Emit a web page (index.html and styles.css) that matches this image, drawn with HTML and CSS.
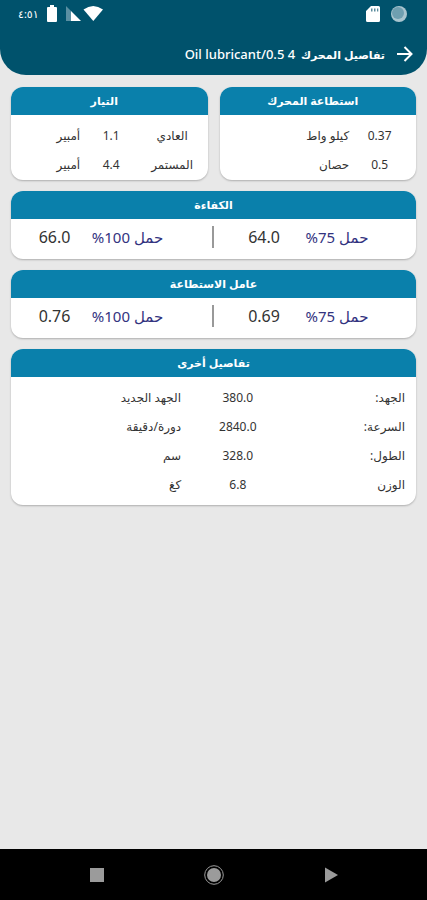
FILE: index.html
```html
<!DOCTYPE html>
<html lang="ar" dir="rtl">
<head>
    <meta charset="UTF-8">
    <meta name="viewport" content="width=device-width, initial-scale=1.0">
    <title>تفاصيل المحرك</title>
    <link rel="stylesheet" href="styles.css">
</head>
<body>
    <header class="top">
        <div class="status">
            <div class="status-group">
                <svg width="16" height="16" viewBox="0 0 16 16">
                    <circle cx="8" cy="8" r="8" fill="#a9c5cf"/>
                    <circle cx="7" cy="7" r="6" fill="#6f9fb0"/>
                </svg>
                <svg width="14" height="16" viewBox="0 0 14 16">
                    <path d="M5 0h7.500a1.500 1.500 0 0 1 1.500 1.500v13a1.500 1.500 0 0 1-1.500 1.500h-11A1.500 1.500 0 0 1 0 14.500V5z" fill="#fff"/>
                    <path d="M5 2.500h1.500v3H5zM8 2.500h1.500v3H8zM11 2.500h1.300v3H11z" fill="#5a8c9d"/>
                </svg>
            </div>
            <div class="status-group signals">
                <svg width="38" height="16" viewBox="0 0 38 16">
                    <path d="M1 0l5 5v10H1z" fill="#5a8fa2"/>
                    <path d="M6 5l10 10H6z" fill="#fff"/>
                    <path d="M18.500 3.500Q28.300-3.500 38 3.500L28.300 15z" fill="#fff"/>
                </svg>
                <svg width="10" height="17" viewBox="0 0 10 17">
                    <path d="M3 0h4v2h2a1 1 0 0 1 1 1v13a1 1 0 0 1-1 1H1a1 1 0 0 1-1-1V3a1 1 0 0 1 1-1h2z" fill="#fff"/>
                </svg>
                <span class="time">٤:٥١</span>
            </div>
        </div>
        <div class="app-bar">
            <button class="back" aria-label="رجوع">
                <svg width="16" height="16" viewBox="0 0 16 16" fill="none" stroke="#fff" stroke-width="2">
                    <path d="M0 8h14M7.500 1l7 7-7 7"/>
                </svg>
            </button>
            <h1 class="title">تفاصيل المحرك&nbsp; <bdi>Oil lubricant/0.5 4</bdi></h1>
        </div>
    </header>

    <main class="content">
        <div class="pair">
            <section class="card">
                <h2 class="card-title">استطاعة المحرك</h2>
                <table class="data power">
                    <tr><td>0.37</td><td>كيلو واط</td></tr>
                    <tr><td>0.5</td><td>حصان</td></tr>
                </table>
            </section>
            <section class="card">
                <h2 class="card-title">التيار</h2>
                <table class="data current">
                    <tr><th>العادي</th><td>1.1</td><td>أمبير</td></tr>
                    <tr><th>المستمر</th><td>4.4</td><td>أمبير</td></tr>
                </table>
            </section>
        </div>

        <section class="card">
            <h2 class="card-title">الكفاءة</h2>
            <dl class="loads">
                <div class="load"><dt>حمل 75%</dt><dd>64.0</dd></div>
                <div class="load"><dt>حمل 100%</dt><dd>66.0</dd></div>
            </dl>
        </section>

        <section class="card">
            <h2 class="card-title">عامل الاستطاعة</h2>
            <dl class="loads">
                <div class="load"><dt>حمل 75%</dt><dd>0.69</dd></div>
                <div class="load"><dt>حمل 100%</dt><dd>0.76</dd></div>
            </dl>
        </section>

        <section class="card">
            <h2 class="card-title">تفاصيل أخرى</h2>
            <table class="data details">
                <tr><th>الجهد:</th><td>380.0</td><td>الجهد الجديد</td></tr>
                <tr><th>السرعة:</th><td>2840.0</td><td>دورة/دقيقة</td></tr>
                <tr><th>الطول:</th><td>328.0</td><td>سم</td></tr>
                <tr><th>الوزن</th><td>6.8</td><td>كغ</td></tr>
            </table>
        </section>
    </main>

    <nav class="nav-bar">
        <button aria-label="السابق">
            <svg width="20" height="20" viewBox="0 0 20 20"><path d="M4 2.500l13 7.500-13 7.500z" fill="#9b9b9b"/></svg>
        </button>
        <button aria-label="الرئيسية">
            <svg width="20" height="20" viewBox="0 0 20 20">
                <circle cx="10" cy="10" r="9.300" fill="none" stroke="#9b9b9b"/>
                <circle cx="10" cy="10" r="7" fill="#9b9b9b"/>
            </svg>
        </button>
        <button aria-label="التطبيقات">
            <svg width="20" height="20" viewBox="0 0 20 20"><path d="M3 3h14v14H3z" fill="#9b9b9b"/></svg>
        </button>
    </nav>
</body>
</html>
```
FILE: styles.css
```css
* {
    box-sizing: border-box;
}

body {
    margin: 0;
    min-height: 100vh;
    display: flex;
    flex-direction: column;
    background-color: #e8e8e8;
    font-family: "Noto Sans", "DejaVu Sans", sans-serif;
    font-size: 12px;
    color: #333;
}

button {
    padding: 0;
    border: 0;
    background: none;
}

svg {
    display: block;
}

.top {
    height: 75px;
    background-color: #00526c;
    border-radius: 0 0 26px 26px;
    color: #fff;
}

.status {
    display: flex;
    justify-content: space-between;
    height: 27px;
    padding: 0 20px 0 18px;
    align-items: center;
}

.status-group {
    display: flex;
    align-items: center;
    gap: 11px;
}

.signals {
    gap: 8px;
}

.time {
    font-size: 11px;
}

.app-bar {
    display: flex;
    align-items: center;
    gap: 12px;
    height: 54px;
    padding: 0 14px;
}

.title {
    margin: 0;
    font-size: 11px;
    font-weight: 600;
    white-space: nowrap;
}

.title bdi {
    font-size: 13px;
    font-weight: 500;
}

.content {
    flex: 1;
    display: flex;
    flex-direction: column;
    gap: 11px;
    padding: 12px 11px;
}

.pair {
    display: grid;
    grid-template-columns: 1fr 1fr;
    gap: 12px;
}

.card {
    background-color: #fff;
    border-radius: 12px;
    overflow: hidden;
    box-shadow: 0 1px 2px rgba(0, 0, 0, 0.25);
}

.card-title {
    margin: 0;
    height: 28px;
    line-height: 28px;
    background-color: #0a80ab;
    color: #fff;
    font-size: 11px;
    font-weight: 600;
    text-align: center;
}

.pair .card-title {
    padding-right: 10px;
}

.data {
    width: 100%;
    margin: 6px 0;
    table-layout: fixed;
    border-collapse: collapse;
}

.pair .data {
    margin-bottom: 1px;
}

.data th,
.data td {
    height: 29px;
    padding: 0;
    font-weight: 400;
    text-align: start;
}

.power td:first-child {
    width: 34%;
    padding-right: 6px;
    text-align: center;
}

.current th,
.current td {
    text-align: center;
}

.current th {
    width: 36%;
}

.current td:nth-child(2) {
    width: 26%;
}

.current td:last-child {
    padding-left: 40px;
}

.details th {
    width: 30%;
    padding-right: 11px;
}

.details td:nth-child(2) {
    width: 28%;
    text-align: center;
}

.loads {
    display: flex;
    align-items: center;
    height: 40px;
    margin: 0;
    padding-bottom: 4px;
}

.load {
    flex: 0 0 50%;
    display: flex;
    align-items: center;
    height: 22px;
    padding-right: 32px;
}

.load + .load {
    padding-right: 37px;
    border-right: 2px solid #999;
}

.load dt {
    width: 94px;
    text-align: center;
    font-size: 15px;
    color: #33337f;
}

.load dd {
    width: 52px;
    margin: 0;
    text-align: center;
    font-size: 16px;
}

.nav-bar {
    display: flex;
    justify-content: center;
    align-items: center;
    gap: 97px;
    height: 51px;
    background-color: #000;
}
```
